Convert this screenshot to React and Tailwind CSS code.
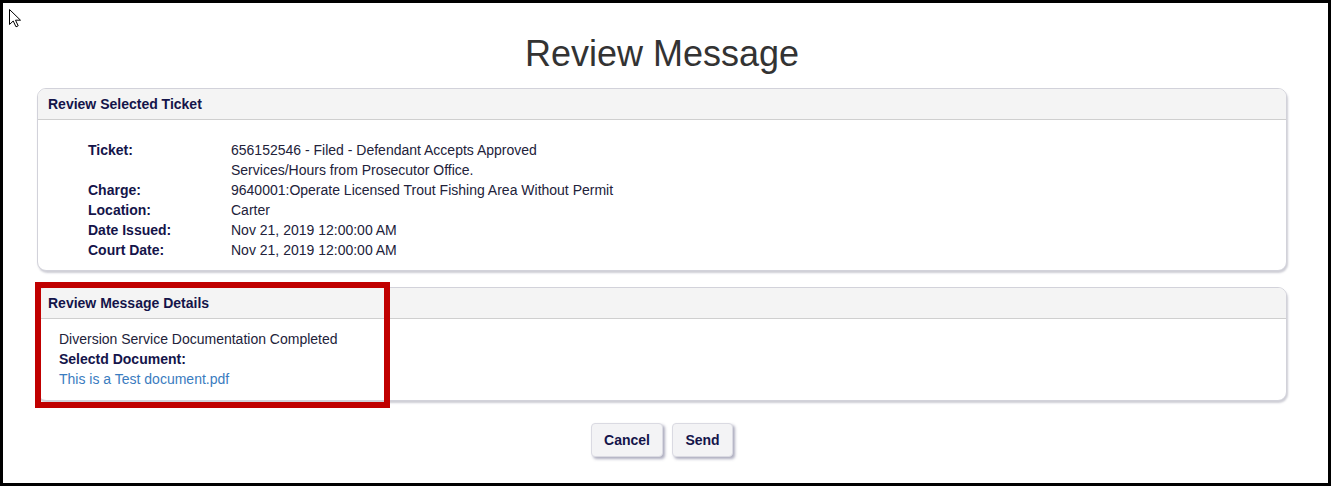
export default function App() {
  const rows = [
    { label: 'Ticket:', value: ['656152546 - Filed - Defendant Accepts Approved', 'Services/Hours from Prosecutor Office.'] },
    { label: 'Charge:', value: ['9640001:Operate Licensed Trout Fishing Area Without Permit'] },
    { label: 'Location:', value: ['Carter'] },
    { label: 'Date Issued:', value: ['Nov 21, 2019 12:00:00 AM'] },
    { label: 'Court Date:', value: ['Nov 21, 2019 12:00:00 AM'] },
  ];

  return (
    <div className="relative w-[1331px] h-[486px] border-[3px] border-black bg-white overflow-hidden font-['Liberation_Sans',Arial,sans-serif]">
      {/* mouse pointer */}
      <svg className="absolute left-[6px] top-[6px]" width="14" height="19" viewBox="0 0 14 19">
        <path d="M0.5 0.5 L0.5 15.5 L4.2 12 L7 17.8 L9.2 16.8 L6.5 11.2 L11.5 11.2 Z" fill="#fff" stroke="#000" strokeWidth="1" strokeLinejoin="miter" />
      </svg>

      <div className="ml-[34px] w-[1250px]">
        <h1 className="mt-[30px] text-center text-[36px] leading-[41px] text-[#333333] font-normal">Review Message</h1>

        {/* ticket panel */}
        <div className="mt-[14px] rounded-[9px] border border-[#d2d2da] bg-white shadow-[1px_2px_2px_rgba(60,60,90,0.25)] overflow-hidden">
          <div className="h-[31px] flex items-center pl-[10px] bg-[#f4f4f4] border-b border-[#cfcfcf] text-[14px] font-bold text-[#14144a]">
            Review Selected Ticket
          </div>
          <div className="pt-[20px] pb-[10px] pl-[50px] text-[14px] leading-[20px]">
            {rows.map((r) => (
              <div key={r.label} className="flex">
                <div className="w-[143px] font-bold text-[#14144a]">{r.label}</div>
                <div className="text-[#22223a]">
                  {r.value.map((v) => (
                    <div key={v}>{v}</div>
                  ))}
                </div>
              </div>
            ))}
          </div>
        </div>

        {/* message panel */}
        <div className="relative mt-[16px]">
          <div className="rounded-[9px] border border-[#d2d2da] bg-white shadow-[1px_2px_2px_rgba(60,60,90,0.25)] overflow-hidden">
            <div className="h-[31px] flex items-center pl-[10px] bg-[#f4f4f4] border-b border-[#cfcfcf] text-[14px] font-bold text-[#14144a]">
              Review Message Details
            </div>
            <div className="pt-[10px] pb-[11px] pl-[21px] text-[14px] leading-[20px]">
              <div className="text-[#22223a]">Diversion Service Documentation Completed</div>
              <div className="font-bold text-[#14144a]">Selectd Document:</div>
              <a className="text-[#3a7cc0] cursor-pointer">This is a Test document.pdf</a>
            </div>
          </div>
          {/* highlight annotation */}
          <div className="absolute left-[-2px] top-[-5px] w-[355px] h-[126px] border-[6px] border-[#c00000] pointer-events-none" />
        </div>

        <div className="mt-[22px] flex justify-center gap-[9px]">
          <button className="w-[72px] h-[34px] rounded-[4px] border border-[#dadae2] bg-[#f3f3f5] text-[14px] font-bold text-[#14144a] shadow-[2px_2px_3px_rgba(70,70,110,0.45)]">
            Cancel
          </button>
          <button className="w-[61px] h-[34px] rounded-[4px] border border-[#dadae2] bg-[#f3f3f5] text-[14px] font-bold text-[#14144a] shadow-[2px_2px_3px_rgba(70,70,110,0.45)]">
            Send
          </button>
        </div>
      </div>
    </div>
  );
}
